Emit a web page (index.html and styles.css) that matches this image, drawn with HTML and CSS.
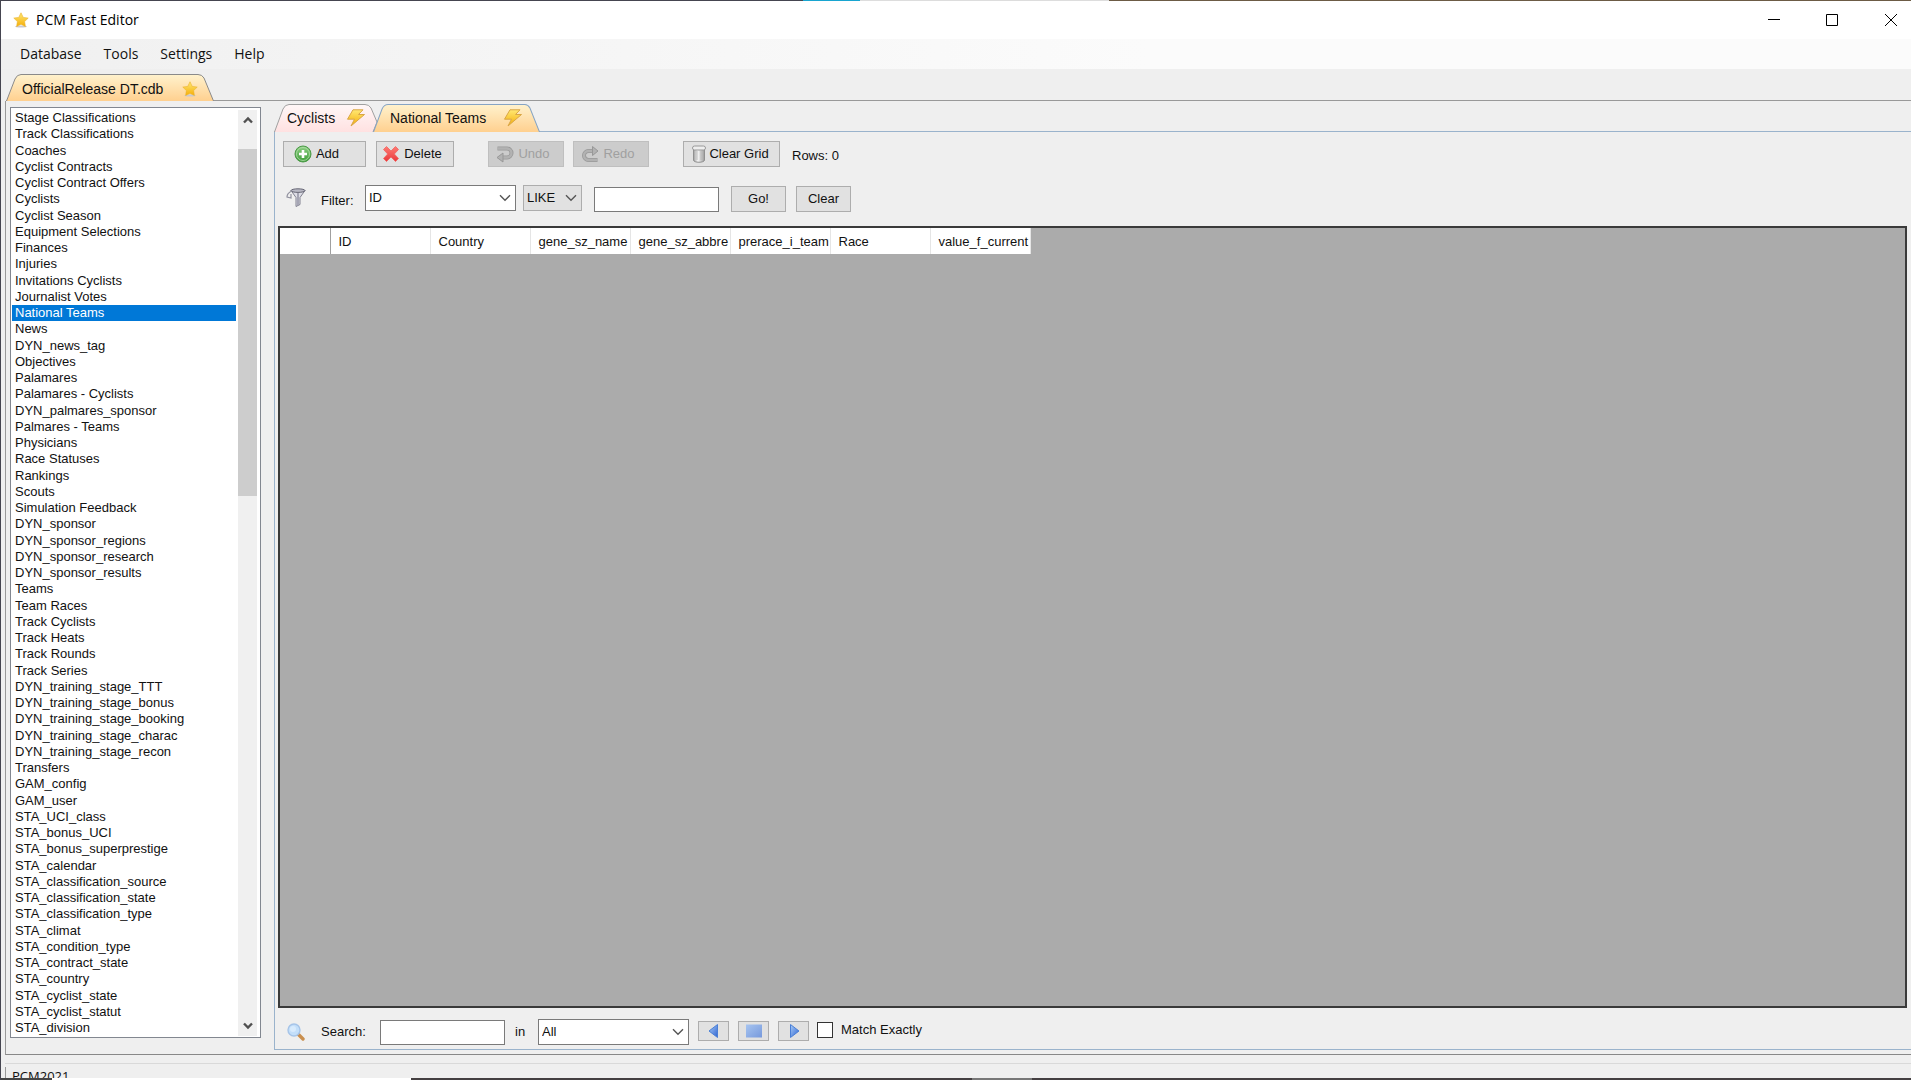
FILE: index.html
```html
<!DOCTYPE html>
<html lang="en">
<head>
<meta charset="utf-8">
<title>PCM Fast Editor</title>
<link rel="stylesheet" href="styles.css">
</head>
<body>
<svg class="defs" aria-hidden="true">
  <defs>
    <linearGradient id="gold" x1="0" y1="0" x2="0" y2="1"><stop offset="0" stop-color="#ffe873"/><stop offset="1" stop-color="#f5ae08"/></linearGradient>
    <linearGradient id="tabOrange" x1="0" y1="0" x2="0" y2="1"><stop offset="0" stop-color="#fff2cd"/><stop offset="1" stop-color="#ffd08f"/></linearGradient>
    <linearGradient id="tabPink" x1="0" y1="0" x2="0" y2="1"><stop offset="0" stop-color="#fff7f7"/><stop offset="1" stop-color="#ffe1e1"/></linearGradient>
    <linearGradient id="green" x1="0" y1="0" x2="0" y2="1"><stop offset="0" stop-color="#8fcf83"/><stop offset="1" stop-color="#3c9c38"/></linearGradient>
    <linearGradient id="red" x1="0" y1="0" x2="0" y2="1"><stop offset="0" stop-color="#ff7b74"/><stop offset="1" stop-color="#e8383c"/></linearGradient>
    <linearGradient id="blue" x1="0" y1="0" x2="1" y2="1"><stop offset="0" stop-color="#a9cdf8"/><stop offset="1" stop-color="#2f63d0"/></linearGradient>
    <linearGradient id="blueSoft" x1="0" y1="0" x2="1" y2="1"><stop offset="0" stop-color="#a6c4f0"/><stop offset="1" stop-color="#7799dc"/></linearGradient>
    <linearGradient id="metal" x1="0" y1="0" x2="1" y2="0"><stop offset="0" stop-color="#9d9d9d"/><stop offset=".4" stop-color="#f7f7f7"/><stop offset="1" stop-color="#9a9a9a"/></linearGradient>
    <symbol id="star" viewBox="0 0 16 16"><ellipse cx="8" cy="14.6" rx="6" ry="1" fill="#c9c9d2"/><path d="M8 .8l2.2 4.6 5 .7-3.6 3.5.8 5L8 12.3l-4.400 2.300.8-5L.8 6.100l5-.7z" fill="url(#gold)" stroke="#eab22c" stroke-width=".6"/></symbol>
    <symbol id="bolt" viewBox="0 0 20 18"><path d="M7 .8h10l-4.500 4.700h6L5 17l3.500-6.800H1.500z" fill="url(#gold)" stroke="#d9a646" stroke-width="1" stroke-linejoin="round"/></symbol>
    <symbol id="chevron" viewBox="0 0 12 8"><path d="M1 1.200l5 5 5-5" fill="none" stroke="#555" stroke-width="1.400"/></symbol>
  </defs>
</svg>

<header class="titlebar">
  <svg class="icon16"><use href="#star"/></svg>
  <h1 class="title">PCM Fast Editor</h1>
  <div class="captions">
    <button type="button" aria-label="Minimize"><svg viewBox="0 0 12 12"><path d="M0 5.500h12" stroke="#000"/></svg></button>
    <button type="button" aria-label="Maximize"><svg viewBox="0 0 12 12"><path d="M.5.5h11v11H.5z" fill="none" stroke="#000"/></svg></button>
    <button type="button" aria-label="Close"><svg viewBox="0 0 12 12"><path d="M0 0l12 12M12 0L0 12" stroke="#000"/></svg></button>
  </div>
</header>

<nav class="menubar">
  <button type="button">Database</button>
  <button type="button">Tools</button>
  <button type="button">Settings</button>
  <button type="button">Help</button>
</nav>

<div class="tabs file-tabs">
  <button type="button" class="tab tab-file">
    <svg class="tab-shape" viewBox="0 0 208 27" preserveAspectRatio="none"><path d="M.5 27L9 5Q11 .5 15 .5H192Q196 .5 198 4L207.500 27" fill="url(#tabOrange)" stroke="#8a8a8a"/></svg>
    <span>OfficialRelease DT.cdb</span><svg class="icon16"><use href="#star"/></svg>
  </button>
</div>

<main class="workspace">
  <aside class="sidebar">
    <ul class="tables">
      <li><button type="button">Stage Classifications</button></li>
      <li><button type="button">Track Classifications</button></li>
      <li><button type="button">Coaches</button></li>
      <li><button type="button">Cyclist Contracts</button></li>
      <li><button type="button">Cyclist Contract Offers</button></li>
      <li><button type="button">Cyclists</button></li>
      <li><button type="button">Cyclist Season</button></li>
      <li><button type="button">Equipment Selections</button></li>
      <li><button type="button">Finances</button></li>
      <li><button type="button">Injuries</button></li>
      <li><button type="button">Invitations Cyclists</button></li>
      <li><button type="button">Journalist Votes</button></li>
      <li class="selected"><button type="button">National Teams</button></li>
      <li><button type="button">News</button></li>
      <li><button type="button">DYN_news_tag</button></li>
      <li><button type="button">Objectives</button></li>
      <li><button type="button">Palamares</button></li>
      <li><button type="button">Palamares - Cyclists</button></li>
      <li><button type="button">DYN_palmares_sponsor</button></li>
      <li><button type="button">Palmares - Teams</button></li>
      <li><button type="button">Physicians</button></li>
      <li><button type="button">Race Statuses</button></li>
      <li><button type="button">Rankings</button></li>
      <li><button type="button">Scouts</button></li>
      <li><button type="button">Simulation Feedback</button></li>
      <li><button type="button">DYN_sponsor</button></li>
      <li><button type="button">DYN_sponsor_regions</button></li>
      <li><button type="button">DYN_sponsor_research</button></li>
      <li><button type="button">DYN_sponsor_results</button></li>
      <li><button type="button">Teams</button></li>
      <li><button type="button">Team Races</button></li>
      <li><button type="button">Track Cyclists</button></li>
      <li><button type="button">Track Heats</button></li>
      <li><button type="button">Track Rounds</button></li>
      <li><button type="button">Track Series</button></li>
      <li><button type="button">DYN_training_stage_TTT</button></li>
      <li><button type="button">DYN_training_stage_bonus</button></li>
      <li><button type="button">DYN_training_stage_booking</button></li>
      <li><button type="button">DYN_training_stage_charac</button></li>
      <li><button type="button">DYN_training_stage_recon</button></li>
      <li><button type="button">Transfers</button></li>
      <li><button type="button">GAM_config</button></li>
      <li><button type="button">GAM_user</button></li>
      <li><button type="button">STA_UCI_class</button></li>
      <li><button type="button">STA_bonus_UCI</button></li>
      <li><button type="button">STA_bonus_superprestige</button></li>
      <li><button type="button">STA_calendar</button></li>
      <li><button type="button">STA_classification_source</button></li>
      <li><button type="button">STA_classification_state</button></li>
      <li><button type="button">STA_classification_type</button></li>
      <li><button type="button">STA_climat</button></li>
      <li><button type="button">STA_condition_type</button></li>
      <li><button type="button">STA_contract_state</button></li>
      <li><button type="button">STA_country</button></li>
      <li><button type="button">STA_cyclist_state</button></li>
      <li><button type="button">STA_cyclist_statut</button></li>
      <li><button type="button">STA_division</button></li>
    </ul>
    <div class="scrollbar">
      <button type="button" aria-label="Scroll up"><svg viewBox="0 0 10 8"><path d="M1 6.500l4-4 4 4" fill="none" stroke="#505050" stroke-width="2.400"/></svg></button>
      <div class="track"><div class="thumb"></div></div>
      <button type="button" aria-label="Scroll down"><svg viewBox="0 0 10 8"><path d="M1 1.500l4 4 4-4" fill="none" stroke="#505050" stroke-width="2.400"/></svg></button>
    </div>
  </aside>

  <section class="editor">
    <div class="tabs table-tabs">
      <button type="button" class="tab tab-cyclists">
        <svg class="tab-shape" viewBox="0 0 104 28" preserveAspectRatio="none"><path d="M.5 28L9 5Q11 .5 15 .5H91Q95 .5 97 4L103 18 99 28" fill="url(#tabPink)" stroke="#a0a0a0"/></svg>
        <span>Cyclists</span><svg class="bolt"><use href="#bolt"/></svg>
      </button>
      <button type="button" class="tab tab-national">
        <svg class="tab-shape" viewBox="0 0 166 28" preserveAspectRatio="none"><path d="M.5 28L9 5Q11 .5 15 .5H151Q154 .5 156 4L165.500 28" fill="url(#tabOrange)" stroke="#86a4c4"/></svg>
        <span>National Teams</span><svg class="bolt"><use href="#bolt"/></svg>
      </button>
    </div>

    <div class="pane">
      <div class="toolbar">
        <button type="button" class="btn add"><svg class="icon18" viewBox="0 0 18 18"><circle cx="9" cy="9" r="8" fill="url(#green)" stroke="#4c9a48"/><circle cx="9" cy="9" r="6.500" fill="none" stroke="#b4deac" stroke-width=".8"/><path d="M9 5v8M5 9h8" stroke="#fff" stroke-width="2.600"/></svg>Add</button>
        <button type="button" class="btn delete"><svg class="icon18" viewBox="0 0 18 18"><path d="M4.500 1.500L9 6l4.500-4.500 3 3L12.300 9l4.200 4.500-3 3L9 12l-4.500 4.500-3-3L5.700 9 1.500 4.500z" fill="url(#red)" stroke="#f2605c" stroke-width=".8" stroke-linejoin="round"/></svg>Delete</button>
        <button type="button" class="btn undo" disabled><svg class="icon18" viewBox="0 0 18 18"><path d="M1.500 3.500H11a4.500 4.500 0 0 1 0 9H7" fill="none" stroke="#999" stroke-width="4"/><path d="M2 3.500h9a4.500 4.500 0 0 1 0 9H6" fill="none" stroke="#b2b2b2" stroke-width="2.400"/><path d="M1 12.500l6-4.500v9z" fill="#b2b2b2" stroke="#989898"/></svg>Undo</button>
        <button type="button" class="btn redo" disabled><svg class="icon18" viewBox="0 0 18 18"><path d="M16.500 15H7.500A4.500 4.500 0 0 1 7.500 6H12" fill="none" stroke="#999" stroke-width="4"/><path d="M16 15H7.500A4.500 4.500 0 0 1 7.500 6H12" fill="none" stroke="#b2b2b2" stroke-width="2.400"/><path d="M17 6l-5.500-4.500v9z" fill="#b2b2b2" stroke="#989898"/></svg>Redo</button>
        <button type="button" class="btn clear-grid"><svg class="icon18" viewBox="0 0 18 18"><path d="M3.500 3v12c0 3 11 3 11 0V3z" fill="url(#metal)" stroke="#909090"/><path d="M7 6v9M11 6v9" stroke="#b5b5b5" stroke-width=".8"/><rect x="2.500" y="1" width="13" height="4" rx="2" fill="#eee" stroke="#999"/></svg>Clear Grid</button>
        <span class="rows">Rows: 0</span>
      </div>

      <div class="filterbar">
        <svg class="funnel" viewBox="0 0 20 20"><path d="M5 2.500l5 7v9l4-2v-7l5-7z" fill="#dddde6" stroke="#80808f" stroke-linejoin="round"/><path d="M12 5v12" stroke="#a5a5b4" stroke-width="2"/><ellipse cx="12" cy="2.600" rx="7" ry="1.800" fill="#b8b8c4" stroke="#666674"/><path d="M6 3Q1 5 1 9l4 1V6" fill="none" stroke="#90909e" stroke-width="1.200"/></svg>
        <label for="filter-field">Filter:</label>
        <div class="combo combo-wide"><select id="filter-field"><option>ID</option></select><svg><use href="#chevron"/></svg></div>
        <div class="combo combo-op"><select aria-label="Comparison"><option>LIKE</option></select><svg><use href="#chevron"/></svg></div>
        <input type="text" class="field" aria-label="Filter value">
        <button type="button" class="btn go">Go!</button>
        <button type="button" class="btn">Clear</button>
      </div>

      <div class="grid">
        <table>
          <thead>
            <tr><th class="corner"></th><th>ID</th><th>Country</th><th>gene_sz_name</th><th>gene_sz_abbre</th><th>prerace_i_team</th><th>Race</th><th>value_f_current</th></tr>
          </thead>
        </table>
      </div>

      <div class="searchbar">
        <svg class="lens" viewBox="0 0 18 18"><path d="M11 11l5 5" stroke="#c98f4e" stroke-width="3.400" stroke-linecap="round"/><circle cx="7" cy="7" r="6" fill="#c3dffa" stroke="#a6c4e8" stroke-width="1.400"/><circle cx="6" cy="6" r="3" fill="#d8ebfd"/></svg>
        <label for="search-text">Search:</label>
        <input type="text" id="search-text" class="field">
        <label for="search-in">in</label>
        <div class="combo combo-wide"><select id="search-in"><option>All</option></select><svg><use href="#chevron"/></svg></div>
        <button type="button" class="btn step" aria-label="Previous"><svg viewBox="0 0 16 14"><path d="M11.500.5v13L3 7z" fill="url(#blue)" stroke="#4a7fd6"/></svg></button>
        <button type="button" class="btn step" aria-label="Stop"><svg viewBox="0 0 16 14"><path d="M0 .5h16v13H0z" fill="url(#blueSoft)"/></svg></button>
        <button type="button" class="btn step" aria-label="Next"><svg viewBox="0 0 16 14"><path d="M4.500.5v13L13 7z" fill="url(#blue)" stroke="#4a7fd6"/></svg></button>
        <label class="check"><input type="checkbox">Match Exactly</label>
      </div>
    </div>
  </section>
</main>

<footer class="statusbar"><span>PCM2021</span></footer>
<div class="desktop-edge"></div>
</body>
</html>
```
FILE: styles.css
```css
* { box-sizing: border-box; }

html, body { height: 100%; }

body {
  margin: 0;
  display: flex;
  flex-direction: column;
  overflow: hidden;
  background: #efefef;
  border-left: 1px solid #454550;
  color: #111;
  font: 13px/16px "Liberation Sans", Arial, sans-serif;
}

button, input, select {
  font: inherit;
  color: inherit;
  margin: 0;
  border-radius: 0;
}

button {
  padding: 0;
  border: 0;
  background: none;
  white-space: nowrap;
}

svg { display: block; flex: none; }
.defs { position: absolute; width: 0; height: 0; }
.icon16 { width: 16px; height: 16px; }
.icon18 { width: 18px; height: 18px; }
.bolt { width: 20px; height: 18px; }

/* Window frame */
.titlebar {
  flex: none;
  display: flex;
  align-items: center;
  height: 39px;
  padding-left: 12px;
  gap: 7px;
  background: linear-gradient(90deg, #454550 0 42%, #18a5d0 42% 45%, #ddd 45% 58%, #6c5b45 58%) top / 100% 1px no-repeat #fff;
}

.title {
  margin: 0;
  font: 14px/20px "Open Sans", "Noto Sans", sans-serif;
  color: #000;
}

.captions { display: flex; margin: 0 -10px 0 auto; }
.captions button {
  width: 58px;
  height: 38px;
  display: grid;
  place-items: center;
}
.captions button:last-child { width: 60px; }
.captions svg { width: 12px; height: 12px; }

.menubar {
  flex: none;
  display: flex;
  gap: 22px;
  height: 30px;
  padding-left: 19px;
  background: linear-gradient(90deg, #f0f0f0, #fbfbfb 60%);
  font: 14px/30px "Open Sans", "Noto Sans", sans-serif;
}

/* Tabs */
.tabs { flex: none; display: flex; font-size: 14px; }
.tab {
  position: relative;
  display: flex;
  align-items: center;
  justify-content: space-between;
}
.tab > * { position: relative; }
.tab .tab-shape {
  position: absolute;
  inset: 0;
  width: 100%;
  height: 100%;
}

.file-tabs {
  margin-top: 5px;
  margin-left: 5px;
  height: 27px;
  border-bottom: 1px solid #999;
}
.tab-file { width: 208px; height: 27px; padding: 3px 16px 0; }

/* Workspace */
.workspace {
  flex: 1;
  min-height: 0;
  display: flex;
  gap: 13px;
  margin-left: 4px;
  padding: 3px 0 4px 4px;
  border-left: 1px solid #999;
  border-bottom: 1px solid #888;
}

.sidebar {
  flex: none;
  display: flex;
  width: 251px;
  margin: 3px 0 12px;
  padding: 2px 3px 1px 1px;
  background: #fff;
  border: 1px solid #828790;
}

.tables {
  flex: 1;
  display: flex;
  flex-direction: column;
  min-width: 0;
  margin: 0 2px 0 0;
  padding: 0;
  list-style: none;
}
.tables li { flex: 1; min-height: 0; display: flex; align-items: center; }
.tables button { flex: 1; padding-left: 3px; text-align: left; line-height: 16px; }
.tables .selected { background: #0078d7; color: #fff; }

.scrollbar {
  flex: none;
  display: flex;
  flex-direction: column;
  width: 19px;
  background: #f0f0f0;
}
.scrollbar button { height: 20px; display: grid; place-items: center; }
.scrollbar svg { width: 10px; height: 8px; }
.track { flex: 1; padding-top: 19px; }
.thumb { height: 40%; background: #cdcdcd; }

.editor {
  flex: 1;
  min-width: 0;
  display: flex;
  flex-direction: column;
}

.table-tabs { height: 27px; }
.tab-cyclists { width: 104px; height: 28px; padding: 0 12px 0 13px; }
.tab-national { width: 167px; height: 28px; margin-left: -5px; padding: 0 17px; }

.pane {
  flex: 1;
  min-height: 0;
  display: flex;
  flex-direction: column;
  padding: 9px 4px 4px 3px;
  border: 1px solid #9ab3cc;
  border-right: 0;
}

.btn {
  display: flex;
  align-items: center;
  justify-content: center;
  gap: 4px;
  height: 26px;
  min-width: 55px;
  background: #e1e1e1;
  border: 1px solid #adadad;
}
.btn:disabled { background: #ccc; border-color: #bfbfbf; color: #a0a0a0; }

.toolbar {
  flex: none;
  display: flex;
  align-items: center;
  padding-left: 5px;
}
.add { width: 83px; padding-right: 16px; }
.delete { width: 78px; margin-left: 10px; padding-right: 6px; }
.undo { width: 76px; margin-left: 34px; padding-right: 6px; }
.redo { width: 76px; margin-left: 9px; padding-right: 6px; }
.clear-grid { width: 97px; margin: 0 12px 0 34px; padding-right: 4px; gap: 1px; }
.rows { padding-top: 3px; }

.filterbar {
  flex: none;
  display: flex;
  align-items: center;
  margin: 17px 0 14px;
  padding-left: 8px;
}
.filterbar label { width: 44px; margin-left: 15px; padding-top: 5px; }
.filterbar .btn, .filterbar .field { margin-top: 2px; }
.funnel { width: 20px; height: 20px; }

.combo {
  position: relative;
  height: 26px;
}
.combo select {
  width: 100%;
  height: 100%;
  padding: 0 3px;
  appearance: none;
  background: #fff;
  border: 1px solid #7a7a7a;
}
.combo svg {
  position: absolute;
  top: 9px;
  right: 5px;
  width: 12px;
  height: 8px;
  pointer-events: none;
}
.combo-wide { width: 151px; }
.combo-op { width: 59px; margin: 0 12px 0 7px; }
.combo-op select { background: #e1e1e1; border-color: #adadad; }

.field {
  width: 125px;
  height: 25px;
  padding: 0 4px;
  background: #fff;
  border: 1px solid #7a7a7a;
}
.go { margin: 0 10px 0 12px; }

.grid {
  flex: 1;
  min-height: 0;
  overflow: hidden;
  background: #ababab;
  border: 2px solid #3a3a3a;
}
.grid table { width: 750px; table-layout: fixed; border-collapse: collapse; background: #fff; }
.grid th {
  width: 100px;
  height: 26px;
  padding: 2px 0 0 8px;
  border-right: 1px solid #e5e5e5;
  font-weight: 400;
  text-align: left;
  white-space: nowrap;
  overflow: hidden;
}
.grid .corner { width: 50px; border-right-color: #a0a0a0; }

.searchbar {
  flex: none;
  display: flex;
  align-items: center;
  padding: 11px 0 0 9px;
}
.lens { width: 18px; height: 18px; }
.searchbar label[for="search-text"] { width: 59px; margin-left: 16px; }
.searchbar label[for="search-in"] { width: 23px; margin-left: 10px; }
.step { width: 31px; min-width: 31px; height: 20px; margin: 0 0 3px 9px; }
.step svg { width: 16px; height: 14px; }
.check { display: flex; align-items: center; gap: 8px; margin: 0 0 4px 8px; }
.check input {
  width: 16px;
  height: 16px;
  appearance: none;
  background: #fff;
  border: 1px solid #333;
}

.statusbar {
  flex: none;
  height: 15px;
  margin-top: 8px;
  margin-left: 4px;
  overflow: hidden;
  border-top: 1px solid #d9d9d9;
  font: 13px/18px "Open Sans", "Noto Sans", sans-serif;
}
.statusbar span { display: block; margin-top: 3px; padding-left: 6px; border-left: 1px solid #999; }

.desktop-edge {
  flex: none;
  height: 2px;
  background: linear-gradient(90deg, #454545 51px, #fff 51px 410px, #443f41 410px 971px, #777 971px 1031px, #443f41 1031px);
}
```
